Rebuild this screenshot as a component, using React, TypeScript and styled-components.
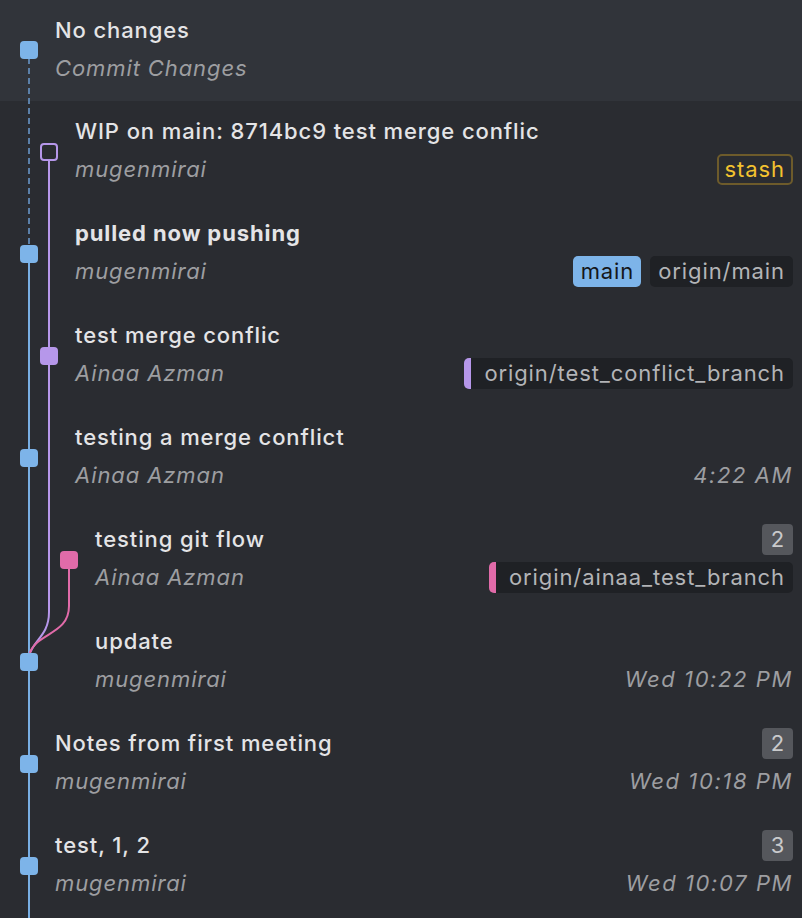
import React from 'react';
import styled, { createGlobalStyle } from 'styled-components';

const GlobalStyle = createGlobalStyle`
  html, body {
    margin: 0;
    padding: 0;
    background: #2a2c31;
  }
  body {
    font-family: Inter, "Noto Sans", "Liberation Sans", sans-serif;
    -webkit-font-smoothing: antialiased;
  }
`;

const colors = {
  blue: '#7db4e9',
  blueLine: '#78aee3',
  dashed: '#5b80a9',
  purple: '#b697ea',
  pink: '#e16ba9',
  title: '#e4e4e6',
  muted: '#9d9ea1',
};

type Tag =
  | { kind: 'stash'; label: string }
  | { kind: 'local'; label: string }
  | { kind: 'remote'; label: string; bar?: string }
  | { kind: 'count'; label: string }
  | { kind: 'time'; label: string };

type Commit = {
  title: string;
  author: string;
  indent: number;
  bold?: boolean;
  top?: Tag[];
  bottom?: Tag[];
};

const commits: Commit[] = [
  {
    title: 'WIP on main: 8714bc9 test merge conflic',
    author: 'mugenmirai',
    indent: 75,
    bottom: [{ kind: 'stash', label: 'stash' }],
  },
  {
    title: 'pulled now pushing',
    author: 'mugenmirai',
    indent: 75,
    bold: true,
    bottom: [
      { kind: 'local', label: 'main' },
      { kind: 'remote', label: 'origin/main' },
    ],
  },
  {
    title: 'test merge conflic',
    author: 'Ainaa Azman',
    indent: 75,
    bottom: [{ kind: 'remote', label: 'origin/test_conflict_branch', bar: colors.purple }],
  },
  {
    title: 'testing a merge conflict',
    author: 'Ainaa Azman',
    indent: 75,
    bottom: [{ kind: 'time', label: '4:22 AM' }],
  },
  {
    title: 'testing git flow',
    author: 'Ainaa Azman',
    indent: 95,
    top: [{ kind: 'count', label: '2' }],
    bottom: [{ kind: 'remote', label: 'origin/ainaa_test_branch', bar: colors.pink }],
  },
  {
    title: 'update',
    author: 'mugenmirai',
    indent: 95,
    bottom: [{ kind: 'time', label: 'Wed 10:22 PM' }],
  },
  {
    title: 'Notes from first meeting',
    author: 'mugenmirai',
    indent: 55,
    top: [{ kind: 'count', label: '2' }],
    bottom: [{ kind: 'time', label: 'Wed 10:18 PM' }],
  },
  {
    title: 'test, 1, 2',
    author: 'mugenmirai',
    indent: 55,
    top: [{ kind: 'count', label: '3' }],
    bottom: [{ kind: 'time', label: 'Wed 10:07 PM' }],
  },
];

const Page = styled.div`
  position: relative;
  width: 802px;
  height: 918px;
  overflow: hidden;
  background: #2a2c31;
  letter-spacing: 0.9px;
`;

const Graph = styled.svg`
  position: absolute;
  left: 0;
  top: 0;
  pointer-events: none;
`;

const HeaderRow = styled.div`
  height: 101px;
  box-sizing: border-box;
  background: #31343a;
  display: flex;
  flex-direction: column;
  justify-content: center;
  padding: 0 9px 4px 55px;
`;

const Row = styled.div<{ $indent: number }>`
  height: 102px;
  box-sizing: border-box;
  padding: 0 9px 4px ${({ $indent }) => $indent}px;
  display: grid;
  grid-template-columns: 1fr auto;
  grid-template-rows: 38px 38px;
  align-content: center;
`;

const Title = styled.div<{ $bold?: boolean }>`
  font-size: 22px;
  line-height: 38px;
  color: ${colors.title};
  font-weight: ${({ $bold }) => ($bold ? 700 : 500)};
  white-space: nowrap;
`;

const Author = styled.div`
  font-size: 22px;
  line-height: 38px;
  font-style: italic;
  color: ${colors.muted};
  white-space: nowrap;
`;

const Side = styled.div`
  display: flex;
  align-items: center;
  justify-content: flex-end;
  gap: 9px;
`;

const Stash = styled.span`
  font-size: 22px;
  line-height: 27px;
  padding: 0 6px;
  color: #f3c22f;
  border: 2px solid #6d5b2b;
  border-radius: 5px;
`;

const Local = styled.span`
  font-size: 22px;
  line-height: 31px;
  padding: 0 7px 0 8px;
  color: #15171a;
  background: ${colors.blue};
  border-radius: 5px;
`;

const Remote = styled.span<{ $bar?: string }>`
  font-size: 22px;
  line-height: 31px;
  padding: 0 8px 0 ${({ $bar }) => ($bar ? 13 : 8)}px;
  color: #b3b4b7;
  background: #1f2125;
  border-radius: 5px;
  border-left: ${({ $bar }) => ($bar ? `7px solid ${$bar}` : 'none')};
`;

const Count = styled.span`
  font-size: 22px;
  line-height: 31px;
  width: 31px;
  text-align: center;
  letter-spacing: 0;
  color: #c9cacc;
  background: #55575c;
  border-radius: 4px;
`;

const Time = styled.span`
  font-size: 22px;
  font-style: italic;
  letter-spacing: 1.6px;
  color: ${colors.muted};
`;

const renderTag = (t: Tag, i: number) => {
  switch (t.kind) {
    case 'stash':
      return <Stash key={i}>{t.label}</Stash>;
    case 'local':
      return <Local key={i}>{t.label}</Local>;
    case 'remote':
      return (
        <Remote key={i} $bar={t.bar}>
          {t.label}
        </Remote>
      );
    case 'count':
      return <Count key={i}>{t.label}</Count>;
    default:
      return <Time key={i}>{t.label}</Time>;
  }
};

const CommitGraph = () => {
  const rowY = (i: number) => 152 + i * 102;
  const node = (x: number, y: number, fill: string, key: string) => (
    <rect key={key} x={x - 9} y={y - 9} width={18} height={18} rx={4} fill={fill} />
  );
  return (
    <Graph width={802} height={918} viewBox="0 0 802 918">
      <line x1={29} y1={58} x2={29} y2={246} stroke={colors.dashed} strokeWidth={2} strokeDasharray="6 4" />
      <line x1={29} y1={254} x2={29} y2={918} stroke={colors.blueLine} strokeWidth={2} />
      <path
        d={`M49 ${rowY(0)} L49 612 C49 636 33 640 29 656`}
        fill="none"
        stroke={colors.purple}
        strokeWidth={2}
      />
      <path
        d={`M69 ${rowY(4)} L69 606 C69 636 34 632 29 656`}
        fill="none"
        stroke={colors.pink}
        strokeWidth={2}
      />
      {node(29, 50, colors.blue, 'h')}
      <rect x={41} y={144} width={16} height={16} rx={3} fill="#2a2c31" stroke={colors.purple} strokeWidth={2} />
      {node(29, rowY(1), colors.blue, 'n1')}
      {node(49, rowY(2), colors.purple, 'n2')}
      {node(29, rowY(3), colors.blue, 'n3')}
      {node(69, rowY(4), colors.pink, 'n4')}
      {node(29, rowY(5), colors.blue, 'n5')}
      {node(29, rowY(6), colors.blue, 'n6')}
      {node(29, rowY(7), colors.blue, 'n7')}
    </Graph>
  );
};

export default function App() {
  return (
    <>
      <GlobalStyle />
      <Page>
        <HeaderRow>
          <Title>No changes</Title>
          <Author>Commit Changes</Author>
        </HeaderRow>
        {commits.map((c, i) => (
          <Row key={i} $indent={c.indent}>
            <Title $bold={c.bold}>{c.title}</Title>
            <Side>{(c.top || []).map(renderTag)}</Side>
            <Author>{c.author}</Author>
            <Side>{(c.bottom || []).map(renderTag)}</Side>
          </Row>
        ))}
        <CommitGraph />
      </Page>
    </>
  );
}
